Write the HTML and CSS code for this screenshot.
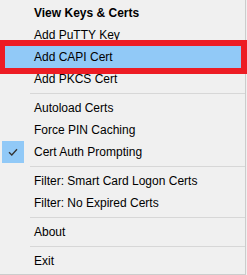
FILE: index.html
```html
<!DOCTYPE html>
<html lang="en">
  <head>
    <meta charset="UTF-8" />
    <title>Pageant Menu</title>
    <link rel="stylesheet" href="styles.css">
  </head>
  <body>
    <div class="menu">
      <div class="item bold">View Keys &amp; Certs</div>
      <div class="item">Add PuTTY Key</div>
      <div class="item hover">Add CAPI Cert</div>
      <div class="item">Add PKCS Cert</div>
      <div class="sep"></div>
      <div class="item">Autoload Certs</div>
      <div class="item">Force PIN Caching</div>
      <div class="item">
        <span class="check">
          <svg width="10" height="8" viewBox="0 0 10 8">
            <path d="M1 4.2 L3.8 7 L9 1.2" fill="none" stroke="#333" stroke-width="1.3" />
          </svg>
        </span>
        Cert Auth Prompting
      </div>
      <div class="sep"></div>
      <div class="item">Filter: Smart Card Logon Certs</div>
      <div class="item">Filter: No Expired Certs</div>
      <div class="sep"></div>
      <div class="item">About</div>
      <div class="sep"></div>
      <div class="item">Exit</div>
      <div class="marker"></div>
    </div>
  </body>
</html>
```

FILE: styles.css
```css
body {
  margin: 0;
  background-color: #f0f0f0;
  font-family: "Liberation Sans", Arial, sans-serif;
  font-size: 12px;
  color: #000000;
}

.menu {
  position: relative;
  width: 245px;
  height: 272px;
  padding-top: 2px;
  background-color: #f0f0f0;
  border-right: 1px solid #cccccc;
  border-bottom: 1px solid #cccccc;
}

.item {
  position: relative;
  height: 22px;
  line-height: 22px;
  margin: 0 1px 0 2px;
  padding-left: 32px;
  white-space: nowrap;
}

.bold {
  font-weight: bold;
}

.hover {
  background-color: #91c9f7;
}

.check {
  position: absolute;
  left: 0;
  top: 0;
  width: 22px;
  height: 22px;
  background-color: #91c9f7;
  display: flex;
  align-items: center;
  justify-content: center;
}

.sep {
  height: 7px;
  margin-left: 30px;
  display: flex;
  align-items: center;
}

.sep::after {
  content: "";
  display: block;
  width: 100%;
  height: 1px;
  background-color: #d7d7d7;
}

/* red annotation box drawn over the highlighted row */
.marker {
  position: absolute;
  left: 0;
  top: 40px;
  width: 247px;
  height: 34px;
  box-sizing: border-box;
  border: 6px solid #ed1c24;
  border-left-width: 5px;
}
```
